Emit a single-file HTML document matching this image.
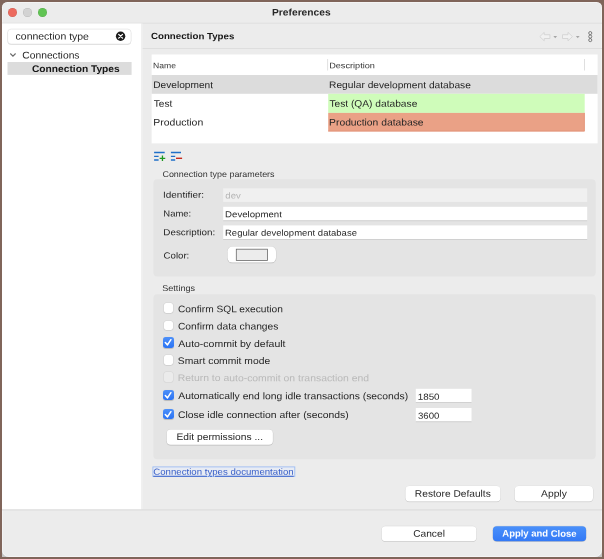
<!DOCTYPE html>
<html><head><meta charset="utf-8"><title>Preferences</title>
<style>
*{box-sizing:border-box;margin:0;padding:0}
html,body{width:604px;height:559px;overflow:hidden;background:#80655a;font-family:"Liberation Sans",sans-serif;font-size:10px;color:#262626;text-rendering:geometricPrecision}
#win{position:absolute;left:2px;top:2px;width:600px;height:554.5px;background:#ececec;border-radius:5.5px 5.5px 7px 7px;overflow:hidden;box-shadow:inset 0 0 0 0.7px rgba(255,255,255,.55)}
#ov{position:absolute;left:0;top:0;width:604px;height:559px;will-change:transform}
.a{position:absolute}
.t{position:absolute;white-space:nowrap;line-height:20px;height:20px;transform-origin:0 50%}
.tl{position:absolute;border-radius:50%;width:9.2px;height:9.2px;top:7.8px;box-shadow:inset 0 0 0 0.5px rgba(0,0,0,.13)}
.inp{position:absolute;background:#fff;box-shadow:0 0.8px 0 #cdcdcd,0 0 0 0.5px #e6e6e6}
.btn{position:absolute;background:#fff;border-radius:4px;box-shadow:0 0.5px 1.2px rgba(0,0,0,.2),0 0 0 0.5px rgba(0,0,0,.05)}
.cb{position:absolute;left:163.7px;width:9.6px;height:9.6px;border-radius:2.1px;background:#fff;box-shadow:0 0.3px 0.8px rgba(0,0,0,.2),0 0 0 0.6px rgba(0,0,0,.05)}
.cb.on{left:163.4px;width:10.4px;height:10.4px;border-radius:2.7px;background:linear-gradient(#4d90f9,#2a73f4);box-shadow:0 0.4px 0.7px rgba(0,0,0,.18)}
.cb.dis{background:#ebebeb;box-shadow:0 0 0 0.5px rgba(0,0,0,.07)}
.cb svg{position:absolute;left:0;top:0}
.grp{position:absolute;left:153.4px;width:442.3px;background:#e4e4e4;border-radius:4px}

</style></head><body>
<div class="a" style="left:2px;top:549px;width:7px;height:7.500px;background:#c6c6c6"></div>
<div class="a" style="left:595px;top:549px;width:7px;height:7.500px;background:#c6c6c6"></div>
<div id="win"></div>
<div id="ov">
  <svg class="a" style="left:0;top:0" width="604" height="559" viewBox="0 0 604 559">
    <rect x="2" y="22.700" width="600" height="0.900" fill="#dcdcdc"/>
    <rect x="2" y="23.500" width="139.200" height="486" fill="#fff"/>
    <rect x="141.200" y="23.500" width="1.500" height="486" fill="#f1f1f1"/>
    <rect x="7.600" y="29.700" width="123.500" height="15" rx="3.500" fill="#000" opacity="0.15"/>
    <rect x="7.600" y="29.100" width="123.500" height="15" rx="3.500" fill="#fff" stroke="#dddddd" stroke-width="0.600"/>
    <rect x="7.500" y="62" width="124.100" height="12.900" fill="#dcdcdc"/>
    <rect x="142.700" y="48" width="459.300" height="1" fill="#dedede"/>
    <rect x="151.600" y="54.500" width="446" height="88.900" fill="#fff"/>
    <rect x="327.200" y="59" width="0.900" height="11.500" fill="#dcdcdc"/>
    <rect x="584.100" y="59" width="0.900" height="11.500" fill="#dcdcdc"/>
    <rect x="151.600" y="75" width="446" height="18.800" fill="#dcdcdc"/>
    <rect x="328.200" y="93.800" width="256.500" height="19.100" fill="#cffcba"/>
    <rect x="328.200" y="112.900" width="256.500" height="18.500" fill="#eaa186"/>
    <path d="M584.350 112.900V131.050H328.200" fill="none" stroke="#df8d70" stroke-width="0.700"/>
    <rect x="153.400" y="179.300" width="442.300" height="97.100" rx="4" fill="#e4e4e4"/>
    <rect x="153.400" y="294.300" width="442.300" height="165" rx="4" fill="#e4e4e4"/>
    <rect x="223.200" y="188.300" width="364" height="13.600" fill="#f0f0f0"/>
    <g fill="#fff">
      <rect x="223.200" y="206.800" width="364" height="13.600"/>
      <rect x="223.200" y="225.400" width="364" height="13.600"/>
      <rect x="415.800" y="388.800" width="55.700" height="13.400"/>
      <rect x="415.800" y="408" width="55.700" height="13.400"/>
    </g>
    <g fill="#cbcbcb">
      <rect x="223.200" y="220.400" width="364" height="0.800"/>
      <rect x="223.200" y="239" width="364" height="0.800"/>
      <rect x="415.800" y="402.200" width="55.700" height="0.800"/>
      <rect x="415.800" y="421.400" width="55.700" height="0.800"/>
    </g>
    <rect x="152.900" y="466.900" width="141.900" height="9.600" fill="#e8ecf4" stroke="#9dbdf3" stroke-width="0.900"/>
    <g transform="translate(120.600 36.250)"><circle r="4.700" fill="#1c1c1c"/><path d="M-1.900 -1.900L1.900 1.900M1.900 -1.900L-1.900 1.900" stroke="#fff" stroke-width="1.300" stroke-linecap="round"/></g>
    <path d="M10.300 53.500L12.950 56.150L15.600 53.500" stroke="#6a6a6a" stroke-width="1.100" fill="none"/>
    <g transform="translate(536 30)">
    <path d="M3.800 6.600L8.200 2.400V4.700H13.900V8.500H8.200V10.800Z" fill="#f1f1f1" stroke="#cdcdcd" stroke-width="0.700" stroke-linejoin="round"/>
    <path d="M17.400 5.900H21.100L19.250 8.300Z" fill="#a6a6a6"/>
    <path d="M36.400 6.600L32 2.400V4.700H26.500V8.500H32V10.800Z" fill="#f1f1f1" stroke="#cdcdcd" stroke-width="0.700" stroke-linejoin="round"/>
    <path d="M39.900 5.900H43.600L41.750 8.300Z" fill="#a6a6a6"/>
    <circle cx="54.250" cy="3.100" r="1.550" fill="none" stroke="#5a5a5a" stroke-width="0.750"/>
    <circle cx="54.250" cy="6.600" r="1.550" fill="none" stroke="#5a5a5a" stroke-width="0.750"/>
    <circle cx="54.250" cy="10.100" r="1.550" fill="none" stroke="#5a5a5a" stroke-width="0.750"/>
    </g>
    <g transform="translate(153 150)">
    <g stroke="#1f6fc8" stroke-width="1.350"><path d="M1.100 2.500H11.700M1.100 6.300H5.600M1.100 10H5.600"/></g>
    <path d="M9.450 5.500V11.100M6.650 8.300H12.250" stroke="#1c981f" stroke-width="1.300"/>
    <g stroke="#1f6fc8" stroke-width="1.350"><path d="M17.900 2.500H28M17.900 6.300H22.200M17.900 10H22.200"/></g>
    <path d="M23 8.300H29.100" stroke="#c62a1e" stroke-width="1.400"/>
    </g>
    <defs><linearGradient id="bl" x1="0" y1="0" x2="0" y2="1"><stop offset="0" stop-color="#4a90fa"/><stop offset="1" stop-color="#3379f6"/></linearGradient></defs>
    <rect x="227.0" y="246.1" width="49.5" height="17.4" rx="5.5" fill="#000" opacity="0.09"/>
    <rect x="227.5" y="247.0" width="48.5" height="16.1" rx="5.0" fill="#000" opacity="0.10"/>
    <rect x="227.5" y="246.5" width="48.5" height="16.1" rx="5.0" fill="#fff"/>
    <rect x="236.300" y="249.200" width="31.200" height="11.300" fill="#ececec" stroke="#6a6a6a" stroke-width="0.800"/>
    <rect x="166.2" y="429.1" width="107.2" height="16.6" rx="4.5" fill="#000" opacity="0.09"/>
    <rect x="166.7" y="430.0" width="106.2" height="15.3" rx="4.0" fill="#000" opacity="0.10"/>
    <rect x="166.7" y="429.5" width="106.2" height="15.3" rx="4.0" fill="#fff"/>
    <rect x="404.9" y="485.7" width="96.1" height="16.6" rx="4.5" fill="#000" opacity="0.09"/>
    <rect x="405.4" y="486.6" width="95.1" height="15.3" rx="4.0" fill="#000" opacity="0.10"/>
    <rect x="405.4" y="486.1" width="95.1" height="15.3" rx="4.0" fill="#fff"/>
    <rect x="514.2" y="485.7" width="79.3" height="16.6" rx="4.5" fill="#000" opacity="0.09"/>
    <rect x="514.7" y="486.6" width="78.3" height="15.3" rx="4.0" fill="#000" opacity="0.10"/>
    <rect x="514.7" y="486.1" width="78.3" height="15.3" rx="4.0" fill="#fff"/>
    <rect x="381.1" y="525.8" width="95.8" height="16.3" rx="4.5" fill="#000" opacity="0.09"/>
    <rect x="381.6" y="526.7" width="94.8" height="15.0" rx="4.0" fill="#000" opacity="0.10"/>
    <rect x="381.6" y="526.2" width="94.8" height="15.0" rx="4.0" fill="#fff"/>
    <rect x="492.4" y="525.8" width="94.2" height="16.3" rx="4.5" fill="#000" opacity="0.09"/>
    <rect x="492.9" y="526.7" width="93.2" height="15.0" rx="4.0" fill="#000" opacity="0.10"/>
    <rect x="492.9" y="526.2" width="93.2" height="15.0" rx="4.0" fill="url(#bl)"/>
    <rect x="2" y="509.400" width="600" height="1" fill="#dadada"/>
  </svg>
  <!-- title bar -->
  <div class="tl" style="left:7.900px;background:#ec6a5e"></div>
  <div class="tl" style="left:22.800px;background:#d3d3d3"></div>
  <div class="tl" style="left:37.800px;background:#61c454"></div>

  <!-- left panel -->

  <!-- right header -->

  <!-- table -->

  <!-- add/remove icons -->

  <!-- group 1 -->

  <!-- group 2 -->
  <div class="cb" style="top:303.300px"></div>
  <div class="cb" style="top:320.800px"></div>
  <div class="cb on" style="top:337.350px"><svg width="10.400" height="10.400" viewBox="0 0 10.400 10.400"><path d="M2.300 5.500L4.500 7.900L7.900 2.700" stroke="#fff" stroke-width="1.550" fill="none" stroke-linecap="round" stroke-linejoin="round"/></svg></div>
  <div class="cb" style="top:355.100px"></div>
  <div class="cb dis" style="top:372.400px"></div>
  <div class="cb on" style="top:389.650px"><svg width="10.400" height="10.400" viewBox="0 0 10.400 10.400"><path d="M2.300 5.500L4.500 7.900L7.900 2.700" stroke="#fff" stroke-width="1.550" fill="none" stroke-linecap="round" stroke-linejoin="round"/></svg></div>
  <div class="cb on" style="top:408.550px"><svg width="10.400" height="10.400" viewBox="0 0 10.400 10.400"><path d="M2.300 5.500L4.500 7.900L7.900 2.700" stroke="#fff" stroke-width="1.550" fill="none" stroke-linecap="round" stroke-linejoin="round"/></svg></div>

  <!-- link focus -->


<div class="t" style="left:272px;top:3px;padding-left:0.02px;font-size:9.6px;font-weight:bold;color:#282828;transform:translateY(0.40px) rotate(0.03deg) scaleX(1.0676);">Preferences</div>
<div class="t" style="left:15px;top:27px;padding-left:0.57px;font-size:9.8px;color:#262626;transform:translateY(0.60px) rotate(0.03deg) scaleX(1.0683);">connection type</div>
<div class="t" style="left:22px;top:46px;padding-left:0.27px;font-size:9.8px;color:#262626;transform:translateY(0.40px) rotate(0.03deg) scaleX(1.0508);">Connections</div>
<div class="t" style="left:32px;top:60px;font-size:9.7px;font-weight:bold;color:#161616;transform:translateY(0.00px) rotate(0.03deg) scaleX(1.0535);">Connection Types</div>
<div class="t" style="left:150px;top:26px;padding-left:0.92px;font-size:9.0px;font-weight:bold;color:#161616;transform:translateY(0.10px) rotate(0.03deg) scaleX(1.0776);">Connection Types</div>
<div class="t" style="left:153px;top:56px;padding-left:0.12px;font-size:8.0px;color:#333;transform:translateY(0.20px) rotate(0.03deg) scaleX(1.0710);">Name</div>
<div class="t" style="left:329px;top:56px;padding-left:0.17px;font-size:8.0px;color:#333;transform:translateY(0.20px) rotate(0.03deg) scaleX(1.1425);">Description</div>
<div class="t" style="left:153px;top:76px;padding-left:0.21px;font-size:9.5px;color:#262626;transform:translateY(0.10px) rotate(0.03deg) scaleX(1.0684);">Development</div>
<div class="t" style="left:153px;top:94px;padding-left:0.69px;font-size:9.5px;color:#262626;transform:translateY(0.80px) rotate(0.03deg) scaleX(1.0643);">Test</div>
<div class="t" style="left:153px;top:113px;padding-left:0.31px;font-size:9.5px;color:#262626;transform:translateY(0.40px) rotate(0.03deg) scaleX(1.0989);">Production</div>
<div class="t" style="left:329px;top:76px;padding-left:0.08px;font-size:9.5px;color:#262626;transform:translateY(0.10px) rotate(0.03deg) scaleX(1.0737);">Regular development database</div>
<div class="t" style="left:329px;top:94px;padding-left:0.38px;font-size:9.5px;color:#262626;transform:translateY(0.80px) rotate(0.03deg) scaleX(1.0742);">Test (QA) database</div>
<div class="t" style="left:329px;top:113px;padding-left:0.11px;font-size:9.5px;color:#262626;transform:translateY(0.40px) rotate(0.03deg) scaleX(1.0834);">Production database</div>
<div class="t" style="left:162px;top:164px;padding-left:0.45px;font-size:8.4px;color:#333;transform:translateY(0.00px) rotate(0.03deg) scaleX(1.0652);">Connection type parameters</div>
<div class="t" style="left:163px;top:184px;font-size:8.8px;color:#262626;transform:translateY(0.80px) rotate(0.03deg) scaleX(1.1346);">Identifier:</div>
<div class="t" style="left:163px;top:203px;padding-left:0.32px;font-size:8.8px;color:#262626;transform:translateY(0.50px) rotate(0.03deg) scaleX(1.0747);">Name:</div>
<div class="t" style="left:163px;top:222px;padding-left:0.28px;font-size:8.8px;color:#262626;transform:translateY(0.20px) rotate(0.03deg) scaleX(1.1193);">Description:</div>
<div class="t" style="left:163px;top:245px;padding-left:0.55px;font-size:8.8px;color:#262626;transform:translateY(0.50px) rotate(0.03deg) scaleX(1.0948);">Color:</div>
<div class="t" style="left:225px;top:185px;padding-left:0.31px;font-size:8.7px;color:#b4b4b4;transform:translateY(0.60px) rotate(0.03deg) scaleX(1.1015);">dev</div>
<div class="t" style="left:225px;top:204px;padding-left:0.06px;font-size:8.7px;color:#262626;transform:translateY(0.20px) rotate(0.03deg) scaleX(1.1100);">Development</div>
<div class="t" style="left:225px;top:222px;font-size:8.7px;color:#262626;transform:translateY(0.70px) rotate(0.03deg) scaleX(1.0926);">Regular development database</div>
<div class="t" style="left:162px;top:278px;padding-left:0.21px;font-size:8.4px;color:#333;transform:translateY(0.10px) rotate(0.03deg) scaleX(1.0846);">Settings</div>
<div class="t" style="left:177px;top:300px;padding-left:0.93px;font-size:9.5px;color:#262626;transform:translateY(0.30px) rotate(0.03deg) scaleX(1.0713);">Confirm SQL execution</div>
<div class="t" style="left:177px;top:317px;padding-left:0.88px;font-size:9.5px;color:#262626;transform:translateY(0.50px) rotate(0.03deg) scaleX(1.0811);">Confirm data changes</div>
<div class="t" style="left:178px;top:335px;padding-left:0.31px;font-size:9.5px;color:#262626;transform:translateY(0.00px) rotate(0.03deg) scaleX(1.1026);">Auto-commit by default</div>
<div class="t" style="left:177px;top:352px;padding-left:0.78px;font-size:9.5px;color:#262626;transform:translateY(0.00px) rotate(0.03deg) scaleX(1.0863);">Smart commit mode</div>
<div class="t" style="left:177px;top:369px;padding-left:0.68px;font-size:9.5px;color:#b9b9b9;transform:translateY(0.10px) rotate(0.03deg) scaleX(1.0951);">Return to auto-commit on transaction end</div>
<div class="t" style="left:178px;top:387px;padding-left:0.27px;font-size:9.5px;color:#262626;transform:translateY(0.10px) rotate(0.03deg) scaleX(1.0880);">Automatically end long idle transactions (seconds)</div>
<div class="t" style="left:177px;top:406px;padding-left:0.88px;font-size:9.5px;color:#262626;transform:translateY(0.00px) rotate(0.03deg) scaleX(1.0923);">Close idle connection after (seconds)</div>
<div class="t" style="left:417px;top:386px;padding-left:0.63px;font-size:8.8px;color:#262626;transform:translateY(0.70px) rotate(0.03deg) scaleX(1.1174);">1850</div>
<div class="t" style="left:417px;top:405px;padding-left:0.86px;font-size:8.8px;color:#262626;transform:translateY(0.80px) rotate(0.03deg) scaleX(1.0950);">3600</div>
<div class="t" style="left:176px;top:428px;padding-left:0.49px;font-size:9.5px;color:#262626;transform:translateY(0.00px) rotate(0.03deg) scaleX(1.0773);">Edit permissions ...</div>
<div class="t" style="left:153px;top:461px;padding-left:0.28px;font-size:8.9px;color:#3a60c8;transform:translateY(0.70px) rotate(0.03deg) scaleX(1.0861);text-decoration:underline;text-decoration-thickness:0.9px;text-underline-offset:0.6px;">Connection types documentation</div>
<div class="t" style="left:414px;top:484px;padding-left:0.80px;font-size:9.5px;color:#262626;transform:translateY(0.80px) rotate(0.03deg) scaleX(1.0731);">Restore Defaults</div>
<div class="t" style="left:541px;top:484px;padding-left:0.04px;font-size:9.5px;color:#262626;transform:translateY(0.80px) rotate(0.03deg) scaleX(1.0848);">Apply</div>
<div class="t" style="left:413px;top:524px;padding-left:0.17px;font-size:9.5px;color:#262626;transform:translateY(0.70px) rotate(0.03deg) scaleX(1.0728);">Cancel</div>
<div class="t" style="left:502px;top:523px;padding-left:0.31px;font-size:9.4px;font-weight:bold;color:#fff;transform:translateY(0.60px) rotate(0.03deg) scaleX(1.0108);">Apply and Close</div>
</div>

</body></html>
